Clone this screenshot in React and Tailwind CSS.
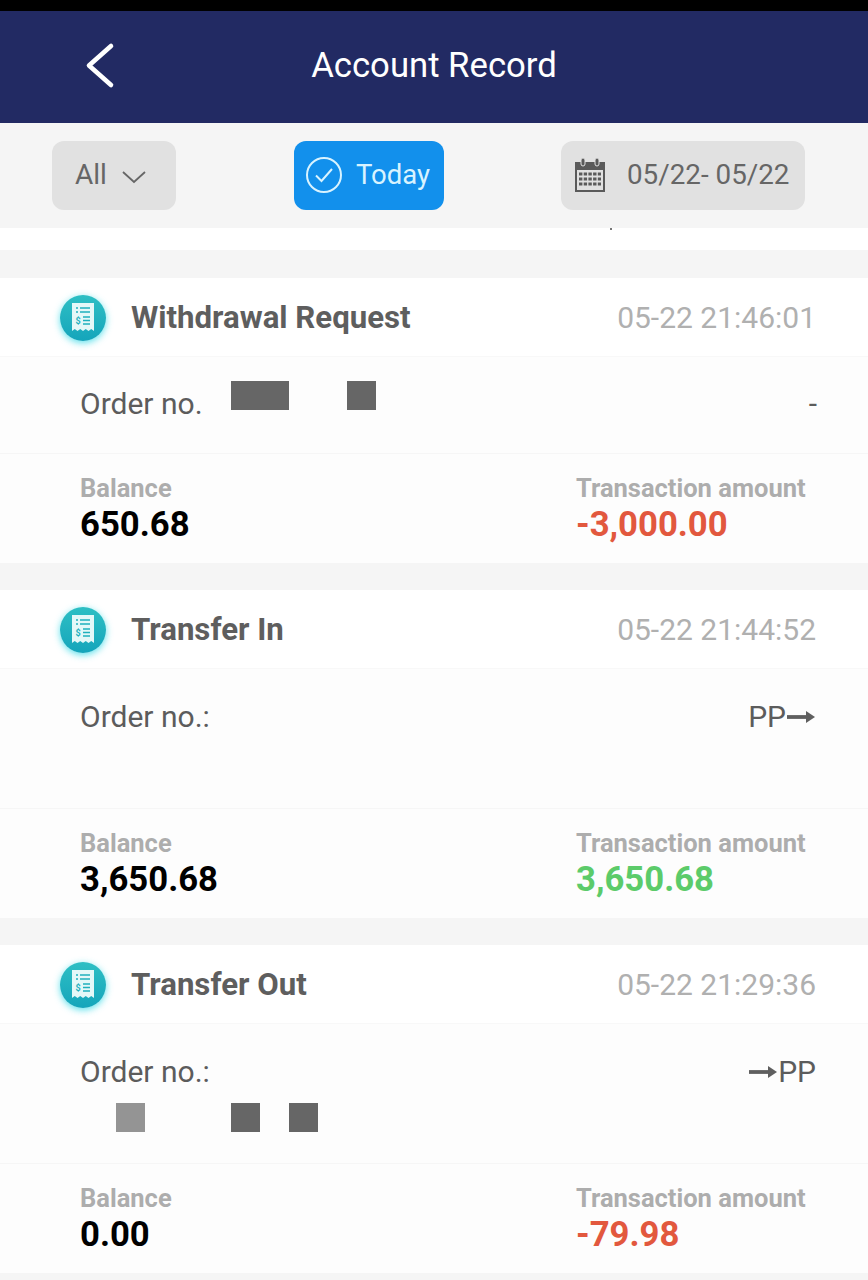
import React from 'react';

const records = [
  {
    title: 'Withdrawal Request',
    time: '05-22 21:46:01',
    balance: '650.68',
    amount: '-3,000.00',
    color: 'text-[#e2583e]',
    kind: 'withdraw',
  },
  {
    title: 'Transfer In',
    time: '05-22 21:44:52',
    balance: '3,650.68',
    amount: '3,650.68',
    color: 'text-[#5ccb6a]',
    kind: 'in',
  },
  {
    title: 'Transfer Out',
    time: '05-22 21:29:36',
    balance: '0.00',
    amount: '-79.98',
    color: 'text-[#e2583e]',
    kind: 'out',
  },
];

const Arrow = () => (
  <svg width="30" height="14" viewBox="0 0 30 14" className="inline-block">
    <path d="M1 7h21" stroke="#5f5f5f" strokeWidth="3.8" fill="none" />
    <path d="M20 1 29 7 20 13z" fill="#5f5f5f" />
  </svg>
);

const ReceiptIcon = () => (
  <div className="-mt-[1px] flex h-[46px] w-[46px] items-center justify-center rounded-full bg-gradient-to-b from-[#2dbfc4] to-[#14a5bb] shadow-[0_2px_7px_rgba(40,215,230,0.75)]">
    <svg width="24" height="31" viewBox="0 0 24 31">
      <path d="M1 1h22v28l-2.75-2-2.75 2-2.75-2-2.75 2-2.75-2-2.75 2-2.75-2L1 29z" fill="#e4f8f8" />
      <path d="M5 6h2M9 6h10M5 10h2M9 10h10M12 15h7M12 18.5h7M12 22h7" stroke="#1fb0bd" strokeWidth="1.5" />
      <text x="4.5" y="22" fontSize="9" fontWeight="700" fill="#1fb0bd" fontFamily="Roboto, sans-serif">$</text>
    </svg>
  </div>
);

const CalendarIcon = () => (
  <svg width="32" height="36" viewBox="0 0 32 36">
    <path d="M1 5h30v30H1z" fill="#5a5a5a" />
    <rect x="3" y="13" width="26" height="20" fill="#e1e1e1" />
    <rect x="7" y="1" width="4" height="8" rx="2" fill="#5a5a5a" stroke="#e1e1e1" />
    <rect x="21" y="1" width="4" height="8" rx="2" fill="#5a5a5a" stroke="#e1e1e1" />
    <path d="M5 17h22M5 22h22M5 27h22" stroke="#5a5a5a" strokeWidth="3.2" strokeDasharray="3.4 1.3" />
  </svg>
);

const OrderRow = ({ kind }) => {
  if (kind === 'withdraw') {
    return (
      <div className="flex h-[97px] items-start justify-between border-b border-[#f6f6f6] pl-[80px] pr-[51px]">
        <div className="flex items-start">
          <span className="mt-[28px] text-[30px] leading-[38px] text-[#5c5c5c]">Order no.</span>
          <div className="ml-[28px] mt-[24px] h-[29px] w-[58px] bg-[#666666]" />
          <div className="ml-[58px] mt-[24px] h-[29px] w-[29px] bg-[#666666]" />
        </div>
        <span className="mt-[28px] text-[30px] leading-[38px] text-[#5c5c5c]">-</span>
      </div>
    );
  }
  return (
    <div className="h-[140px] border-b border-[#f6f6f6] pl-[80px] pr-[52px]">
      <div className="flex items-start justify-between pt-[29px]">
        <span className="text-[30px] leading-[38px] text-[#5c5c5c]">Order no.:</span>
        <span className="flex items-center text-[30px] leading-[38px] text-[#5c5c5c]">
          {kind === 'out' && <Arrow />}
          PP
          {kind === 'in' && <Arrow />}
        </span>
      </div>
      {kind === 'out' && (
        <div className="ml-[36px] mt-[12px] flex">
          <div className="h-[29px] w-[29px] bg-[#949494]" />
          <div className="ml-[86px] h-[29px] w-[29px] bg-[#666666]" />
          <div className="ml-[29px] h-[29px] w-[29px] bg-[#666666]" />
        </div>
      )}
    </div>
  );
};

const RecordCard = ({ record }) => (
  <div className="bg-[#fdfdfd]">
    <div className="flex h-[79px] items-center justify-between border-b border-[#f8f8f8] bg-white pl-[60px] pr-[52px] pt-[2px]">
      <div className="flex items-center">
        <ReceiptIcon />
        <span className="ml-[25px] text-[31.2px] font-bold leading-[40px] text-[#5e5e5e]">{record.title}</span>
      </div>
      <span className="text-[30px] leading-[38px] text-[#b0b0b0]">{record.time}</span>
    </div>
    <OrderRow kind={record.kind} />
    <div className="flex h-[109px] justify-between pl-[80px] pr-[63px] pt-[20px]">
      <div>
        <div className="text-[25.5px] font-bold leading-[28px] text-[#adadad]">Balance</div>
        <div className="mt-[2px] text-[34.7px] font-bold leading-[40px] text-black">{record.balance}</div>
      </div>
      <div className="w-[229px]">
        <div className="whitespace-nowrap text-[25.5px] font-bold leading-[28px] text-[#adadad]">Transaction amount</div>
        <div className={`mt-[2px] text-[34.7px] font-bold leading-[40px] ${record.color}`}>{record.amount}</div>
      </div>
    </div>
  </div>
);

export default function App() {
  return (
    <div className="h-[1280px] w-[868px] overflow-hidden bg-[#f5f5f5] font-['Roboto',sans-serif]">
      <div className="h-[11px] bg-black" />

      {/* Header */}
      <div className="relative flex h-[112px] items-center justify-center bg-[#222a63] pb-[4px]">
        <svg width="30" height="48" viewBox="0 0 30 48" className="absolute left-[85px] top-[31px]">
          <path d="M26 4 4 23.5 26 43" stroke="#fff" strokeWidth="4.6" strokeLinecap="round" strokeLinejoin="round" fill="none" />
        </svg>
        <h1 className="text-[34.7px] font-normal leading-[44px] text-white">Account Record</h1>
      </div>

      {/* Filters */}
      <div className="flex h-[105px] items-start bg-[#f5f5f5] pl-[52px] pt-[18px]">
        <div className="flex h-[69px] w-[124px] items-center rounded-[12px] bg-[#e1e1e1] pb-[1px] pl-[23px]">
          <span className="text-[28px] text-[#666666]">All</span>
          <svg width="26" height="14" viewBox="0 0 26 14" className="ml-[14px] mt-[4px]">
            <path d="M2 2l11 10L24 2" stroke="#666666" strokeWidth="1.8" fill="none" />
          </svg>
        </div>
        <div className="ml-[118px] flex h-[69px] w-[150px] items-center rounded-[12px] bg-[#1290ec] pb-[1px] pl-[12px]">
          <div className="flex h-[36px] w-[36px] items-center justify-center rounded-full border-2 border-[#d8f3ff]">
            <svg width="22" height="18" viewBox="0 0 22 18">
              <path d="M3 9.5 8.5 15 19 3" stroke="#d8f3ff" strokeWidth="2" fill="none" />
            </svg>
          </div>
          <span className="ml-[14px] text-[27.5px] text-[#d8f3ff]">Today</span>
        </div>
        <div className="ml-[117px] flex h-[69px] w-[244px] items-center rounded-[12px] bg-[#e1e1e1] pb-[1px] pl-[13px]">
          <CalendarIcon />
          <span className="ml-[21px] whitespace-nowrap text-[27.8px] text-[#666666]">05/22- 05/22</span>
        </div>
      </div>

      <div className="h-[22px] bg-white">
        <div className="ml-[610px] h-[2px] w-[2px] bg-[#777777]" />
      </div>

      {/* Records */}
      <div className="flex flex-col gap-[27px] pt-[28px]">
        {records.map((r) => (
          <RecordCard key={r.time} record={r} />
        ))}
      </div>
    </div>
  );
}
